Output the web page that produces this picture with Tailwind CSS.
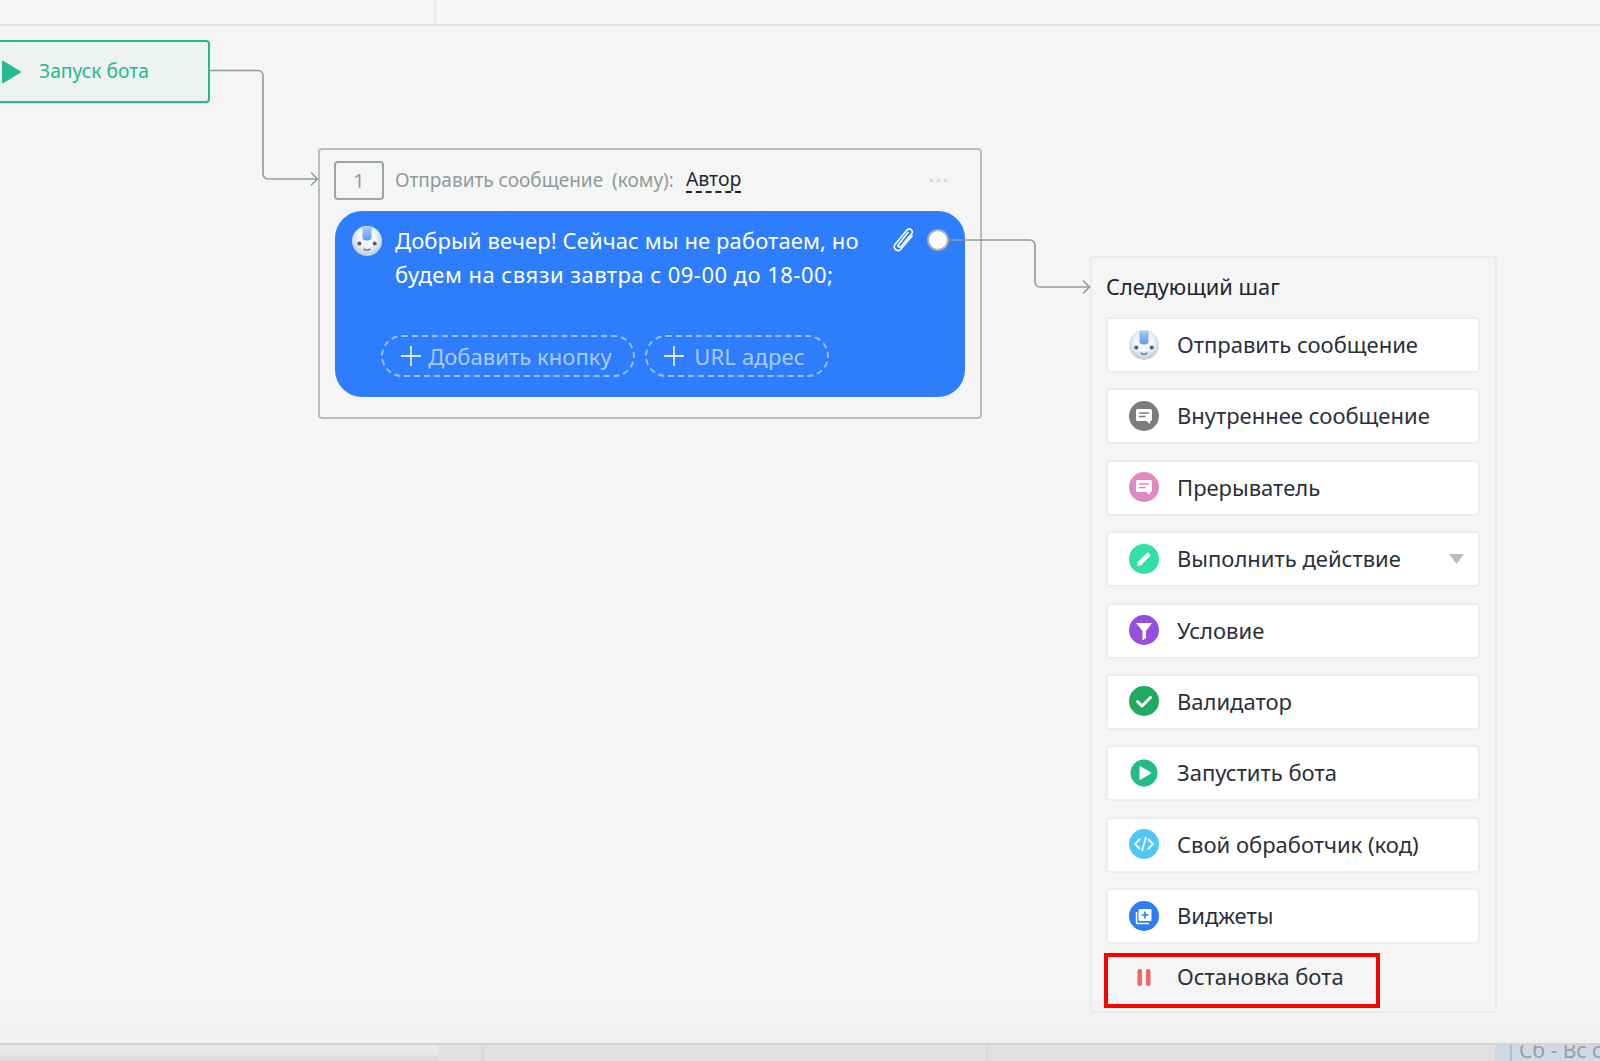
<!DOCTYPE html>
<html lang="ru">
<head>
<meta charset="utf-8">
<script src="https://cdn.jsdelivr.net/npm/@tailwindcss/browser@4"></script>
<title>Бот</title>
</head>
<body class="m-0 bg-[#f5f5f5] font-['Noto_Sans',sans-serif] overflow-hidden">
<svg width="0" height="0" class="absolute">
  <defs>
    <radialGradient id="face" cx="0.5" cy="0.4" r="0.62"><stop offset="0.45" stop-color="#f4f7fa"/><stop offset="1" stop-color="#bcc8d3"/></radialGradient>
    <linearGradient id="crest" x1="0" y1="0" x2="0" y2="1"><stop offset="0" stop-color="#a9cbf5"/><stop offset="1" stop-color="#5d9df0"/></linearGradient>
    <symbol id="robot" viewBox="0 0 30 30">
      <circle cx="15" cy="15" r="15" fill="url(#face)"/>
      <path d="M10.500 0.800C11 0.300 19 0.300 19.500 0.800V11.500c0 2-1.500 3-4.500 3s-4.500-1-4.500-3z" fill="url(#crest)"/>
      <circle cx="7.300" cy="17.500" r="2" fill="#46627d"/>
      <circle cx="22.700" cy="17.500" r="2" fill="#46627d"/>
      <path d="M12 23c1.500 1.600 4.500 1.600 6 0" fill="none" stroke="#46627d" stroke-width="1.100" stroke-linecap="round"/>
    </symbol>
  </defs>
</svg>
<div class="flex flex-col h-[1061px] w-[1600px]">
  <!-- top bar -->
  <div class="h-[26px] shrink-0 border-b-2 border-[#e4e7e7] flex">
    <div class="w-[436px] border-r-2 border-[#e8eaea]"></div>
  </div>

  <!-- canvas -->
  <div class="relative flex-1 bg-gradient-to-b from-[#f5f5f5] from-95% to-[#f0f0f0]">
    <!-- connectors -->
    <svg class="absolute left-0 top-0 pointer-events-none z-10" width="1600" height="1017" viewBox="0 26 1600 1017" fill="none" stroke="#8f9c9c" stroke-width="1.600">
      <path d="M209 70.500H258a5 5 0 0 1 5 5V174a5 5 0 0 0 5 5H317"/>
      <path d="M311 172.500l6.500 6.500-6.500 6.500"/>
      <path d="M948 240H1030a5 5 0 0 1 5 5V282a5 5 0 0 0 5 5H1089"/>
      <path d="M1083 280.500l6.500 6.500-6.500 6.500"/>
    </svg>

    <!-- start node -->
    <div class="absolute left-[-10px] top-[14px] w-[220px] h-[63px] border-2 border-[#1fbd8d] rounded-[4px] bg-[#eef2f1] flex items-center pl-[10px]">
      <svg width="19" height="24" viewBox="0 0 19 24"><path d="M1.500 1L18 11a1.200 1.200 0 0 1 0 2L1.500 23A1 1 0 0 1 0 22V2A1 1 0 0 1 1.500 1z" fill="#25bb8c"/></svg>
      <span class="ml-[18px] -mt-[2px] text-[19.300px] text-[#25bb8c] leading-none whitespace-nowrap">Запуск бота</span>
    </div>

    <!-- message node -->
    <div class="absolute left-[318px] top-[122px] w-[664px] h-[271px] border-2 border-[#b9bebe] rounded-[4px] pt-[11px] px-[15px]">
      <div class="flex items-center h-[39px] -ml-[1px]">
        <div class="w-[50px] h-[39px] border-2 border-[#9aa6a6] rounded-[4px] flex items-center justify-center text-[20px] text-[#8e9a9a]">1</div>
        <span class="ml-[11px] text-[19px] text-[#8f9b9b] whitespace-nowrap">Отправить сообщение</span>
        <span class="ml-[9px] text-[19px] text-[#8f9b9b] whitespace-nowrap">(кому):</span>
        <span class="ml-[12px] text-[19.500px] leading-[24px] text-[#1f2a33] border-b-2 border-dashed border-[#222] whitespace-nowrap -mt-[2px]">Автор</span>
        <div class="ml-auto mr-[18px] flex gap-[3.500px]">
          <i class="block w-[3.500px] h-[3.500px] rounded-full bg-[#d0d3d3]"></i><i class="block w-[3.500px] h-[3.500px] rounded-full bg-[#d0d3d3]"></i><i class="block w-[3.500px] h-[3.500px] rounded-full bg-[#d0d3d3]"></i>
        </div>
      </div>
      <div class="relative mt-[11px] w-[630px] h-[186px] rounded-[27px] bg-[#2d7dfc]">
        <svg class="absolute left-[17px] top-[15px]" width="30" height="30"><use href="#robot"/></svg>
        <p class="absolute left-[60px] top-[13px] w-[490px] text-[22px] leading-[33.500px] text-white whitespace-nowrap">
          <span class="block tracking-[0.100px]">Добрый вечер! Сейчас мы не работаем, но</span>
          <span class="block tracking-[0.470px]">будем на связи завтра с 09-00 до 18-00;</span>
        </p>
        <svg class="absolute left-[557px] top-[14px]" width="23" height="27" viewBox="0 0 23 27" fill="none" stroke="#fff" stroke-width="1.600" stroke-linecap="round"><path d="M16 7.500L6.500 19.500c-1.300 1.700 1 3.500 2.400 2L19.500 9c2.700-3.300-2-7-4.700-3.700L3.300 19c-3.500 4.300 2.500 9 6 4.700L20 11"/></svg>
        <div class="absolute left-[592px] top-[18px] w-[22px] h-[22px] rounded-full bg-white border-2 border-[#a4adb3]"></div>
        <div class="absolute left-[46px] top-[124px] flex gap-[10px]">
          <div class="h-[42px] w-[254px] pr-[3px] rounded-full border-2 border-dashed border-white/50 flex items-center justify-center text-[22px] tracking-[0.050px] text-white/60 whitespace-nowrap">
            <svg class="mr-[7px]" width="20" height="20" viewBox="0 0 20 20" stroke="#dce9fe" stroke-width="1.800"><path d="M10 0V20M0 10H20"/></svg>Добавить кнопку</div>
          <div class="h-[42px] w-[184px] pr-[5px] rounded-full border-2 border-dashed border-white/50 flex items-center justify-center text-[22px] tracking-[0.200px] text-white/60 whitespace-nowrap">
            <svg class="mr-[10px]" width="20" height="20" viewBox="0 0 20 20" stroke="#dce9fe" stroke-width="1.800"><path d="M10 0V20M0 10H20"/></svg>URL адрес</div>
        </div>
      </div>
    </div>

    <!-- next step panel -->
    <div class="absolute left-[1090px] top-[230px] w-[407px] h-[757px] border-2 border-[#ebebeb] rounded-[4px] pl-[14px] pr-[15px] pt-[14px]">
      <div class="text-[21.800px] leading-[30px] text-[#22272e] h-[33px]">Следующий шаг</div>
      <div class="mt-[12px] flex flex-col gap-[15.400px]">
        <div class="h-[56px] pb-[1px] bg-white rounded-[4px] border-2 border-[#ececec] flex items-center pl-[21px] text-[22px] text-[#29303a]">
          <svg class="mr-[18px] shrink-0" width="30" height="30"><use href="#robot"/></svg>Отправить сообщение</div>
        <div class="h-[56px] pb-[1px] bg-white rounded-[4px] border-2 border-[#ececec] flex items-center pl-[21px] text-[22px] text-[#29303a]">
          <svg class="mr-[18px] shrink-0" width="30" height="30" viewBox="0 0 30 30"><circle cx="15" cy="15" r="15" fill="#7a7c80"/><path d="M8.500 8h13A1.500 1.500 0 0 1 23 9.500v9a1.500 1.500 0 0 1-1.500 1.500H21v3l-3.500-3h-9A1.500 1.500 0 0 1 7 18.500v-9A1.500 1.500 0 0 1 8.500 8z" fill="#fff"/><path d="M10 12h10M10 15.500h6.500" stroke="#7a7c80" stroke-width="1.500"/></svg>Внутреннее сообщение</div>
        <div class="h-[56px] pb-[1px] bg-white rounded-[4px] border-2 border-[#ececec] flex items-center pl-[21px] text-[22px] text-[#29303a]">
          <svg class="mr-[18px] shrink-0" width="30" height="30" viewBox="0 0 30 30"><circle cx="15" cy="15" r="15" fill="#e088c0"/><path d="M8.500 8h13A1.500 1.500 0 0 1 23 9.500v9a1.500 1.500 0 0 1-1.500 1.500H21v3l-3.500-3h-9A1.500 1.500 0 0 1 7 18.500v-9A1.500 1.500 0 0 1 8.500 8z" fill="#fff"/><path d="M10 12h10M10 15.500h6.500" stroke="#e088c0" stroke-width="1.500"/></svg>Прерыватель</div>
        <div class="h-[56px] pb-[1px] bg-white rounded-[4px] border-2 border-[#ececec] flex items-center pl-[21px] text-[22px] text-[#29303a]">
          <svg class="mr-[18px] shrink-0" width="30" height="30" viewBox="0 0 30 30"><circle cx="15" cy="15" r="15" fill="#33dfa3"/><path d="M8 22l.800-4L18 8.800a1 1 0 0 1 1.400 0l1.800 1.800a1 1 0 0 1 0 1.400L12 21.200z" fill="#fff"/></svg>Выполнить действие
          <svg class="ml-auto mr-[14px]" width="15" height="10" viewBox="0 0 15 10"><path d="M0 0H15L7.500 10z" fill="#bdbdbd"/></svg></div>
        <div class="h-[56px] pb-[1px] bg-white rounded-[4px] border-2 border-[#ececec] flex items-center pl-[21px] text-[22px] text-[#29303a]">
          <svg class="mr-[18px] shrink-0" width="30" height="30" viewBox="0 0 30 30"><circle cx="15" cy="15" r="15" fill="#9650e0"/><path d="M7 8h16l-6 8v7l-3.500 2.500V16z" fill="#fff"/></svg>Условие</div>
        <div class="h-[56px] pb-[1px] bg-white rounded-[4px] border-2 border-[#ececec] flex items-center pl-[21px] text-[22px] text-[#29303a]">
          <svg class="mr-[18px] shrink-0" width="30" height="30" viewBox="0 0 30 30"><circle cx="15" cy="15" r="15" fill="#22a960"/><path d="M8.500 15.500l4.500 4.500 8.500-8.500" fill="none" stroke="#fff" stroke-width="3" stroke-linecap="round" stroke-linejoin="round"/></svg>Валидатор</div>
        <div class="h-[56px] pb-[1px] bg-white rounded-[4px] border-2 border-[#ececec] flex items-center pl-[21px] text-[22px] text-[#29303a]">
          <svg class="mr-[18px] shrink-0" width="30" height="30" viewBox="0 0 30 30"><circle cx="15" cy="15" r="13.500" fill="#22bb8a"/><path d="M11 8.500l11 6.500-11 6.500z" fill="#fff" stroke="#fff" stroke-linejoin="round"/></svg>Запустить бота</div>
        <div class="h-[56px] pb-[1px] bg-white rounded-[4px] border-2 border-[#ececec] flex items-center pl-[21px] text-[22px] text-[#29303a]">
          <svg class="mr-[18px] shrink-0" width="30" height="30" viewBox="0 0 30 30"><circle cx="15" cy="15" r="15" fill="#4fc9f3"/><path d="M10.500 10.500L6 15l4.500 4.500M19.500 10.500L24 15l-4.500 4.500M16.800 8.500L13.200 21.500" fill="none" stroke="#fff" stroke-width="1.800" stroke-linecap="round" stroke-linejoin="round"/></svg>Свой обработчик (код)</div>
        <div class="h-[56px] pb-[1px] bg-white rounded-[4px] border-2 border-[#ececec] flex items-center pl-[21px] text-[22px] text-[#29303a]">
          <svg class="mr-[18px] shrink-0" width="30" height="30" viewBox="0 0 30 30"><circle cx="15" cy="15" r="15" fill="#2f7df5"/><path d="M10.500 8h11a1 1 0 0 1 1 1v10a1 1 0 0 1-1 1h-11a1 1 0 0 1-1-1V9a1 1 0 0 1 1-1z" fill="#fff"/><path d="M7.500 11v10.500a1 1 0 0 0 1 1H20" fill="none" stroke="#fff" stroke-width="1.500"/><path d="M16 10.500v7M12.500 14h7" stroke="#2f7df5" stroke-width="1.700"/></svg>Виджеты</div>
      </div>
      <div class="absolute left-[12px] top-[695px] w-[276px] h-[55px] border-4 border-[#ff0000] flex items-center pl-[21px] text-[22px] text-[#29303a] whitespace-nowrap">
        <svg class="mr-[18px] shrink-0 -mt-[7px]" width="30" height="30" viewBox="0 0 30 30"><rect x="8.500" y="7" width="4.500" height="17" rx="2" fill="#f0686c"/><rect x="17" y="7" width="4.500" height="17" rx="2" fill="#f0686c"/></svg><span class="-mt-[8px]">Остановка бота</span>
      </div>
    </div>
  </div>

  <!-- bottom bar -->
  <div class="h-[18px] shrink-0 border-t-2 border-[#d2d4d4] bg-[#e1e1e1] flex text-[21px] text-[#9a9fa5] overflow-hidden">
    <div class="w-[438px] h-full bg-gradient-to-b from-[#e9e9e9] from-40% to-[#d9d9d9]"></div>
    <div class="w-[45px] border-r border-[#d4d4d4]"></div>
    <div class="w-[505px] border-r border-[#d4d4d4]"></div>
    <div class="w-[507px]"></div>
    <div class="flex-1 bg-[#d0dae4] pl-[15px] flex overflow-hidden">
      <div class="border-l-2 border-[#a9bfd6] pl-[7px] leading-[10px] h-full whitespace-nowrap">Сб - Вс с 09</div>
    </div>
  </div>
</div>
</body>
</html>
